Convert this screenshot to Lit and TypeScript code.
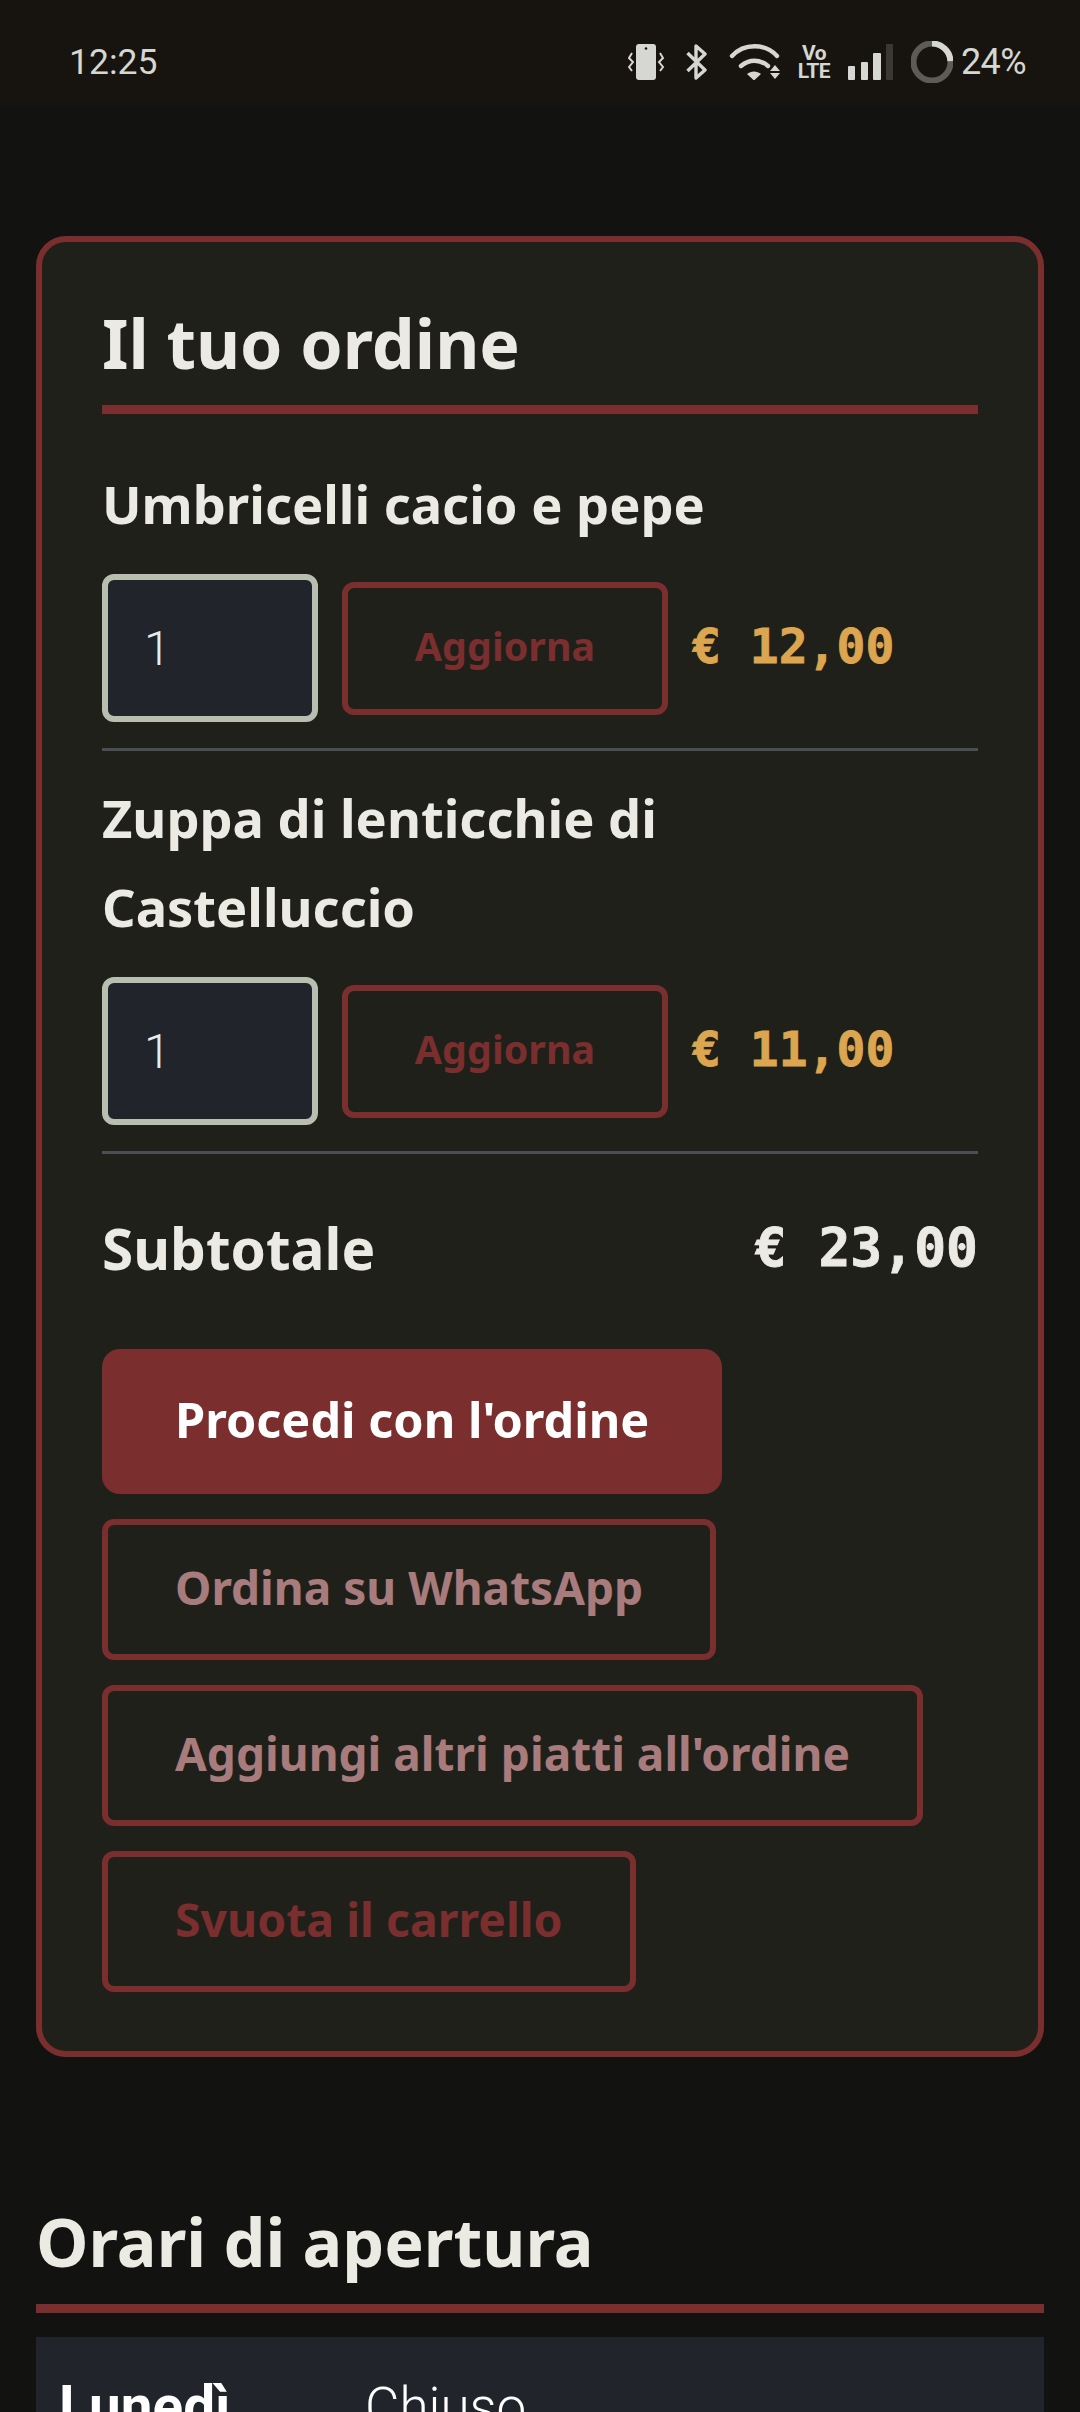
import { LitElement, html, css, svg } from "lit";
import { customElement } from "lit/decorators.js";

const items = [
  { name: "Umbricelli cacio e pepe", price: "€ 12,00" },
  { name: "Zuppa di lenticchie di Castelluccio", price: "€ 11,00" },
];

const ringArc = () => {
  const r = 18.5;
  const c = 2 * Math.PI * r;
  return svg`<circle cx="21" cy="21" r="${r}" fill="none" stroke="#5c5b58" stroke-width="6"/>
  <circle cx="21" cy="21" r="${r}" fill="none" stroke="#d6d6d2" stroke-width="6" stroke-dasharray="${c * 0.24} ${c}" transform="rotate(-90 21 21)"/>`;
};

@customElement("app-root")
export class AppRoot extends LitElement {
  static styles = css`
    :host { display: block; width: 1080px; height: 2412px; overflow: hidden; background: #121211; font-family: "Noto Sans", "Liberation Sans", sans-serif; color: #ecebe3; }
    * { box-sizing: border-box; }
    .status { height: 105px; background: #17140f; display: flex; align-items: center; padding: 18px 54px 0 69px; justify-content: space-between; color: #d6d6d2; font-family: Roboto, sans-serif; font-size: 35.5px; }
    .icons { display: flex; align-items: center; height: 44px; }
    .icons svg { display: block; flex: none; }
    .volte { width: 34px; margin: 0 17px 0 16px; font-weight: 700; font-size: 21px; line-height: 18px; text-align: center; letter-spacing: -0.5px; }
    .batt { margin-left: 8px; font-size: 36px; letter-spacing: -0.6px; }
    main { padding: 131px 36px 0; }
    .card { border: 6px solid #7a2e2e; border-radius: 30px; background: #20201b; padding: 51px 60px 59px; }
    h2 { margin: 0; font-weight: 700; font-size: 68px; line-height: 100px; color: #ecebe3; }
    .card h2 { padding-bottom: 12px; border-bottom: 9px solid #7a2e2e; }
    .item { border-bottom: 3px solid #4a4f55; padding: 22px 0 26px; }
    .item:first-of-type { padding-top: 45px; }
    .name { font-size: 52.4px; font-weight: 700; line-height: 89px; margin-bottom: 26px; padding-right: 16px; }
    .row { display: flex; align-items: center; gap: 24px; }
    input { width: 216px; height: 148px; border: 6px solid #b9bfb0; border-radius: 12px; background: #21252b; color: #ecebe3; font: 300 48px Roboto, sans-serif; padding: 0 36px 0 36px; outline: none; appearance: textfield; }
    button { font-family: inherit; font-weight: 700; border-radius: 12px; background: transparent; border: 6px solid #7a2e2e; display: block; cursor: pointer; }
    .upd { width: 326px; height: 133px; color: #7a2e2e; font-size: 39.4px; padding: 0 0 4px; }
    .price { font: 700 48px "DejaVu Sans Mono", "Liberation Mono", monospace; color: #dca54f; -webkit-text-stroke: 0.8px #dca54f; padding-bottom: 4px; }
    .sub { display: flex; justify-content: space-between; align-items: center; height: 195px; padding-bottom: 8px; font-size: 56.7px; font-weight: 700; }
    .sub .amt { font: 700 53px "DejaVu Sans Mono", "Liberation Mono", monospace; -webkit-text-stroke: 0.8px #ecebe3; }
    .actions { display: flex; flex-direction: column; align-items: flex-start; gap: 25px; }
    .actions button { font-size: 46px; height: 141px; padding: 0 67px 6px; white-space: nowrap; }
    .actions .go { background: #7a2e2e; color: #fff; border: 0; height: 145px; padding: 0 73px 6px; border-radius: 18px; font-size: 48.6px; }
    .actions .alt { color: #a87c7c; }
    .actions .clr { color: #7a2e2e; font-size: 46.4px; }
    .hours { margin-top: 134px; }
    .hours h2 { font-size: 66.4px; line-height: 100px; padding-bottom: 13px; border-bottom: 9px solid #7a2e2e; }
    .tbl { margin-top: 24px; background: #21252b; padding: 34px 23px; display: grid; grid-template-columns: 306px 1fr; line-height: 72px; font-family: Roboto, sans-serif; color: #fff; }
    .tbl b { font-weight: 700; font-size: 56.7px; }
    .tbl span { font-weight: 300; font-size: 53px; }
  `;

  render() {
    return html`
      <div class="status">
        <span>12:25</span>
        <div class="icons">
          <svg width="38" height="36" viewBox="0 0 38 36" style="margin-right:20px">
            <rect x="8" y="0" width="20" height="36" rx="3" fill="#d6d6d2"/><circle cx="18" cy="4.5" r="1.3" fill="#17140f"/>
            <path d="M4 9 L1 14 L5 18 L1 23 L4 27 M32 9 L35 14 L31 18 L35 23 L32 27" fill="none" stroke="#d6d6d2" stroke-width="2"/>
          </svg>
          <svg width="22" height="36" viewBox="0 0 22 36" style="margin-right:21px">
            <path d="M1.5 9 L19 26 L10 34 V2 L19 10 L1.5 27" fill="none" stroke="#d6d6d2" stroke-width="3.4" stroke-linejoin="round"/>
          </svg>
          <svg width="52" height="36" viewBox="0 0 52 36">
            <g fill="none" stroke="#d6d6d2" stroke-width="4.4" stroke-linecap="round">
              <path d="M3 12 C15 -1 36 -1 48 12"/><path d="M12 22 C20 15 31 15 39 22"/>
            </g>
            <path d="M18 30 C22 26.5 28 26.5 32 30 L25 36.5 Z" fill="#d6d6d2"/>
            <path d="M41 27 L46 21 L51 27 Z M41 29 H51 L46 35 Z" fill="#d6d6d2"/>
          </svg>
          <div class="volte">Vo<br />LTE</div>
          <svg width="46" height="36" viewBox="0 0 46 36">
            <rect x="0" y="22" width="7" height="14" rx="1" fill="#d6d6d2"/><rect x="13" y="18" width="7" height="18" rx="1" fill="#d6d6d2"/>
            <rect x="25" y="9" width="8" height="27" rx="1" fill="#d6d6d2"/><rect x="38" y="0" width="7" height="36" rx="1" fill="#3a3835"/>
          </svg>
          <svg width="42" height="42" viewBox="0 0 42 42" style="margin-left:17px">${ringArc()}</svg>
          <span class="batt">24%</span>
        </div>
      </div>
      <main>
        <section class="card">
          <h2>Il tuo ordine</h2>
          ${items.map(
            (i) => html`<div class="item">
              <div class="name">${i.name}</div>
              <div class="row">
                <input type="text" .value=${"1"} />
                <button class="upd">Aggiorna</button>
                <span class="price">${i.price}</span>
              </div>
            </div>`
          )}
          <div class="sub"><span>Subtotale</span><span class="amt">€ 23,00</span></div>
          <div class="actions">
            <button class="go">Procedi con l'ordine</button>
            <button class="alt">Ordina su WhatsApp</button>
            <button class="alt">Aggiungi altri piatti all'ordine</button>
            <button class="clr">Svuota il carrello</button>
          </div>
        </section>
        <section class="hours">
          <h2>Orari di apertura</h2>
          <div class="tbl"><b>Lunedì</b><span>Chiuso</span></div>
        </section>
      </main>
    `;
  }
}
